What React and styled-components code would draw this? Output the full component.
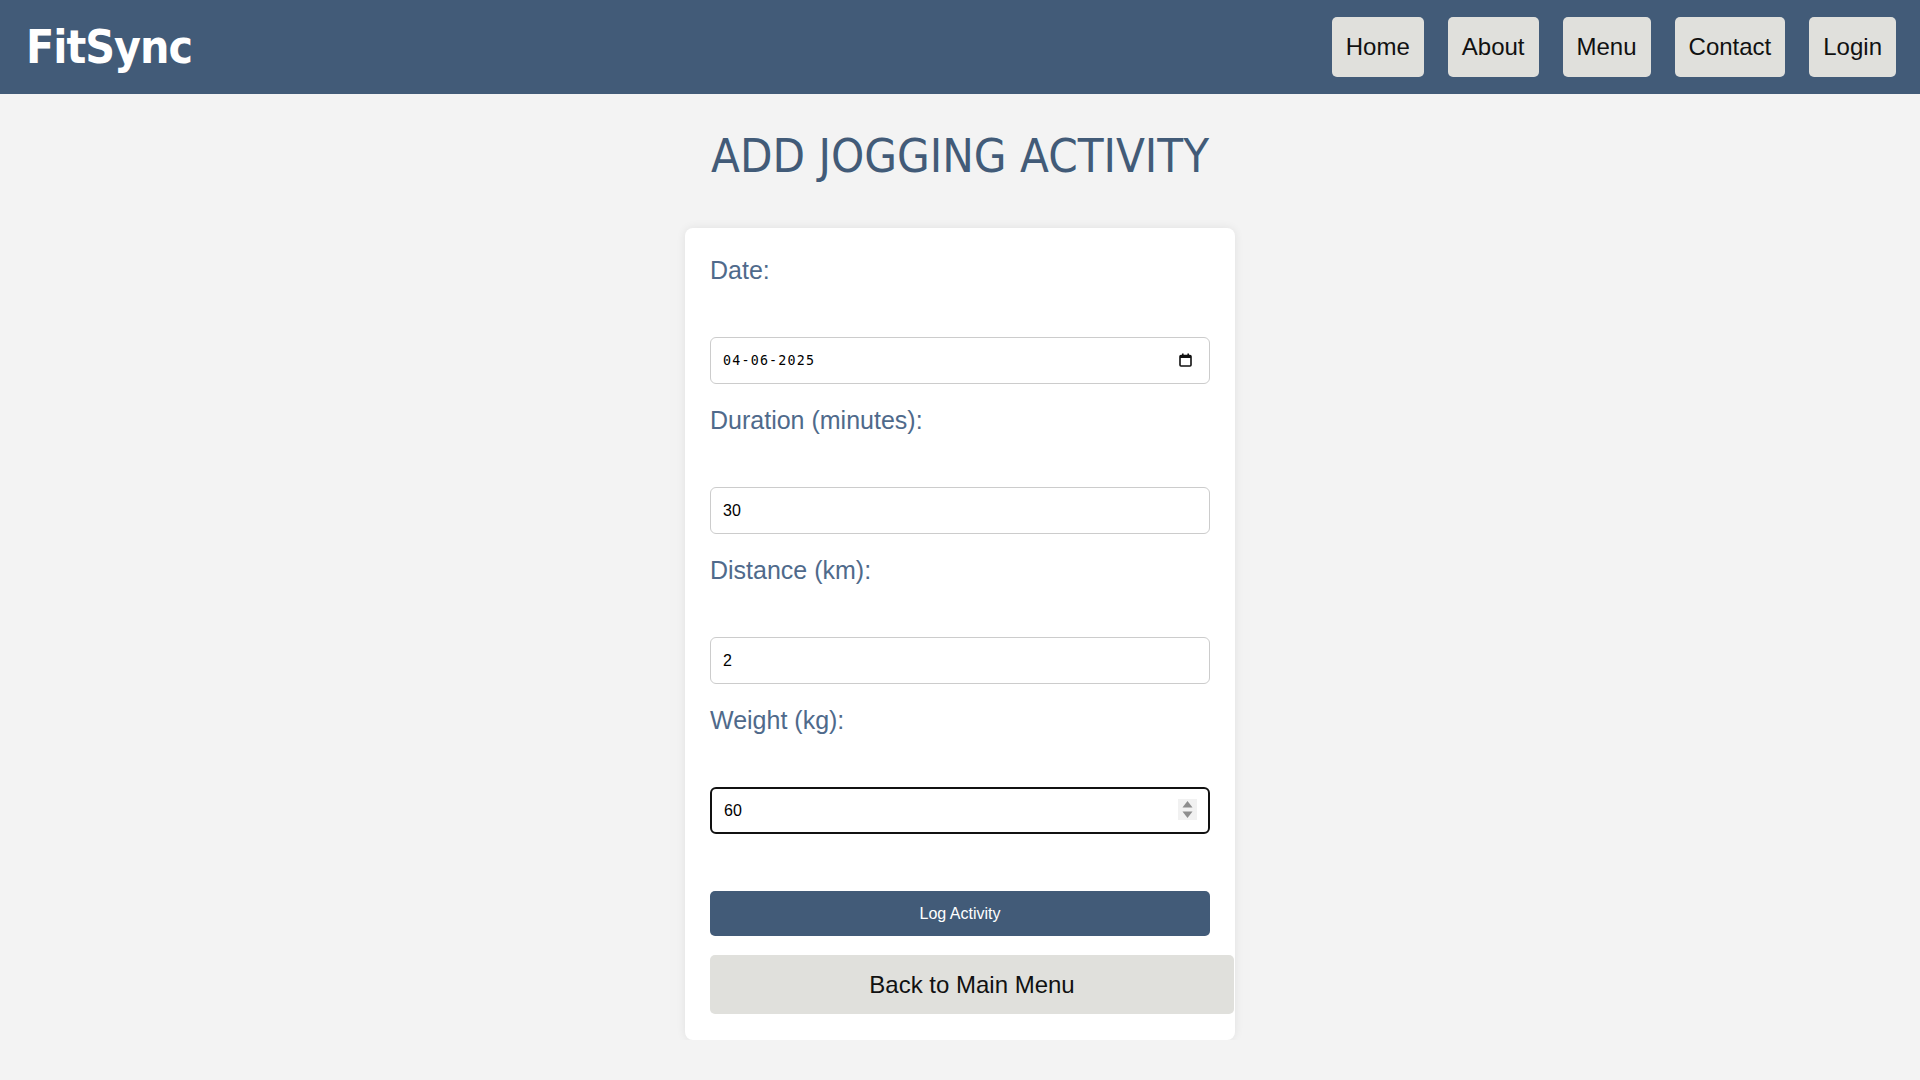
import React, { useState } from 'react';
import styled, { createGlobalStyle } from 'styled-components';

const GlobalStyle = createGlobalStyle`
  body {
    margin: 0;
    background-color: #f3f3f3;
    font-family: 'Liberation Sans', Arial, sans-serif;
  }
`;

const colors = {
  navy: '#425b78',
  label: '#4f6a8b',
  grey: '#e0e0dc',
};

const Header = styled.header`
  height: 94px;
  background-color: ${colors.navy};
  display: flex;
  align-items: center;
  justify-content: space-between;
  padding: 0 24px 0 26px;
`;

const Logo = styled.h1`
  margin: 0;
  color: #fff;
  font-family: 'DejaVu Sans Condensed', 'DejaVu Sans', sans-serif;
  font-weight: bold;
  font-size: 46px;
  letter-spacing: -1px;
  line-height: 1;
`;

const Nav = styled.nav`
  display: flex;
  gap: 24px;
`;

const NavButton = styled.button`
  height: 60px;
  padding: 0 14px;
  border: none;
  border-radius: 5px;
  background-color: ${colors.grey};
  color: #111;
  font-family: 'Liberation Sans', Arial, sans-serif;
  font-size: 24px;
  cursor: pointer;
`;

const Main = styled.main`
  display: flex;
  flex-direction: column;
  align-items: center;
`;

const Title = styled.h2`
  margin: 32px 0 42px;
  color: ${colors.navy};
  font-family: 'DejaVu Sans Condensed', 'DejaVu Sans', sans-serif;
  font-weight: normal;
  font-size: 47px;
  line-height: 60px;
`;

const Card = styled.form`
  width: 550px;
  box-sizing: border-box;
  padding: 28px 25px 26px;
  background-color: #fff;
  border-radius: 8px;
  box-shadow: 0 0 10px rgba(0, 0, 0, 0.08);
`;

const Label = styled.label`
  display: block;
  margin-bottom: 52px;
  color: ${colors.label};
  font-size: 25px;
  line-height: 29px;
`;

const Field = styled.div`
  position: relative;
  margin-bottom: 22px;
`;

const Input = styled.input`
  display: block;
  width: 100%;
  height: 47px;
  box-sizing: border-box;
  padding: 0 12px;
  border: ${({ $focused }) => ($focused ? '2px solid #111' : '1px solid #ccc')};
  border-radius: 6px;
  background: #fff;
  color: #000;
  font-family: ${({ $mono }) =>
    $mono ? "'DejaVu Sans Mono', monospace" : "'Liberation Sans', Arial, sans-serif"};
  font-size: ${({ $mono }) => ($mono ? '13.33px' : '16px')};
  letter-spacing: ${({ $mono }) => ($mono ? '1.2px' : 'normal')};
  outline: none;

  &::-webkit-outer-spin-button,
  &::-webkit-inner-spin-button {
    -webkit-appearance: none;
    margin: 0;
  }
`;

const Spinner = styled.span`
  position: absolute;
  right: 13px;
  top: 12px;
  width: 19px;
  height: 21px;
  background-color: #f1f1f1;
  display: flex;
  align-items: center;
  justify-content: center;
`;

const CalendarIcon = styled.svg`
  position: absolute;
  right: 18px;
  top: 16px;
`;

const SubmitButton = styled.button`
  display: block;
  width: 100%;
  height: 45px;
  margin-top: 57px;
  border: none;
  border-radius: 5px;
  background-color: ${colors.navy};
  color: #fff;
  font-family: 'Liberation Sans', Arial, sans-serif;
  font-size: 16px;
  cursor: pointer;
`;

const BackButton = styled.button`
  display: block;
  width: calc(100% + 24px);
  height: 59px;
  margin-top: 19px;
  box-sizing: border-box;
  border: none;
  border-radius: 5px;
  background-color: ${colors.grey};
  color: #111;
  font-family: 'Liberation Sans', Arial, sans-serif;
  font-size: 24px;
  cursor: pointer;
`;

const fields = [
  { id: 'date', label: 'Date:', type: 'text', initial: '04-06-2025', icon: 'calendar' },
  { id: 'duration', label: 'Duration (minutes):', type: 'number', initial: '30' },
  { id: 'distance', label: 'Distance (km):', type: 'number', initial: '2' },
  { id: 'weight', label: 'Weight (kg):', type: 'number', initial: '60', icon: 'spinner' },
];

export default function App() {
  const [values, setValues] = useState(
    Object.fromEntries(fields.map((f) => [f.id, f.initial]))
  );

  return (
    <>
      <GlobalStyle />
      <Header>
        <Logo>FitSync</Logo>
        <Nav>
          {['Home', 'About', 'Menu', 'Contact', 'Login'].map((item) => (
            <NavButton key={item}>{item}</NavButton>
          ))}
        </Nav>
      </Header>
      <Main>
        <Title>ADD JOGGING ACTIVITY</Title>
        <Card onSubmit={(e) => e.preventDefault()}>
          {fields.map((f) => (
            <React.Fragment key={f.id}>
              <Label htmlFor={f.id}>{f.label}</Label>
              <Field>
                <Input
                  id={f.id}
                  type={f.type}
                  $mono={f.icon === 'calendar'}
                  $focused={f.icon === 'spinner'}
                  value={values[f.id]}
                  onChange={(e) => setValues({ ...values, [f.id]: e.target.value })}
                />
                {f.icon === 'calendar' && (
                  <CalendarIcon width="13" height="14" viewBox="0 0 13 14">
                    <rect x="1" y="2.5" width="11" height="10.5" rx="1" fill="none" stroke="#111" strokeWidth="1.6" />
                    <rect x="1" y="2.5" width="11" height="2.5" fill="#111" />
                    <rect x="3" y="0.5" width="1.6" height="3" fill="#111" />
                    <rect x="8.4" y="0.5" width="1.6" height="3" fill="#111" />
                  </CalendarIcon>
                )}
                {f.icon === 'spinner' && (
                  <Spinner>
                    <svg width="11" height="19" viewBox="0 0 11 19">
                      <path d="M5.5 1 L10.5 7.5 L0.5 7.5 Z" fill="#8d8d8d" />
                      <path d="M0.5 11.5 L10.5 11.5 L5.5 18 Z" fill="#8d8d8d" />
                    </svg>
                  </Spinner>
                )}
              </Field>
            </React.Fragment>
          ))}
          <SubmitButton type="submit">Log Activity</SubmitButton>
          <BackButton type="button">Back to Main Menu</BackButton>
        </Card>
      </Main>
    </>
  );
}
